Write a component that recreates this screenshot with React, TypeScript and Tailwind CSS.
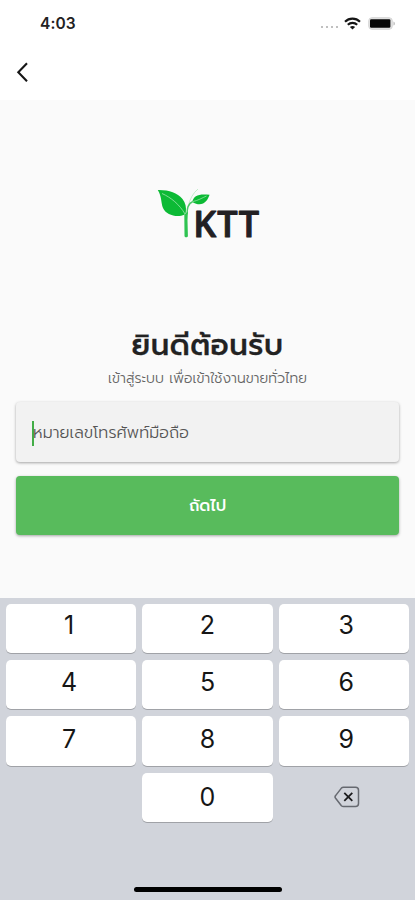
import React from 'react';

const digits = ['1', '2', '3', '4', '5', '6', '7', '8', '9'];

function StatusBar() {
  return (
    <div className="flex h-[46px] items-center justify-between pl-10 pr-[19px]">
      <span className="pt-px text-[15.5px] font-semibold leading-none tracking-[0.1px] text-[#222]">4:03</span>
      <div className="flex items-center">
        <div className="mr-[6px] mt-[8px] flex gap-[3px]">
          <span className="size-[2px] bg-[#c0c0c0]" />
          <span className="size-[2px] bg-[#c0c0c0]" />
          <span className="size-[2px] bg-[#c0c0c0]" />
          <span className="size-[2px] bg-[#c0c0c0]" />
        </div>
        <svg width="17" height="13" viewBox="0 0 17 13" fill="none" stroke="#151515" strokeWidth="2.1" className="mr-[7px]">
          <path d="M1 4.8C5.2.6 11.8.6 16 4.8" />
          <path d="M3.8 7.8c2.7-2.6 6.7-2.6 9.4 0" />
          <path d="M8.5 12.5 5.9 9.9c1.5-1.3 3.7-1.3 5.2 0z" fill="#151515" stroke="none" />
        </svg>
        <svg width="28" height="13" viewBox="0 0 28 13">
          <rect x=".7" y=".7" width="23.6" height="11.6" rx="3.2" fill="#e2e2e2" stroke="#d6d6d6" strokeWidth="1" />
          <rect x="2" y="2.2" width="20.4" height="8.6" rx="1.2" fill="#080808" />
          <path d="M25.5 4.4c1.8.6 1.8 3.6 0 4.2z" fill="#b5b5b5" />
        </svg>
      </div>
    </div>
  );
}

function Logo() {
  return (
    <svg width="112" height="64" viewBox="0 0 112 64">
      <path d="M.8 2C12 1.800 20 4.500 25.500 11c3 4 4 8 3.300 13.500l-1.500 2.300C20 30 9 27 6 20 3.800 14.500 5 9 .8 2z" fill="#0cba35" />
      <path d="M5 5.500C14 9.500 22.500 16.500 28 26" fill="none" stroke="#8fe0a2" strokeWidth=".9" />
      <path d="M35.200 14C36.500 7.500 42 5.500 52.500 6.800 50.500 13.500 45 20 35.200 14z" fill="#0cba35" />
      <path d="M36 13.500c5-1 9-3.500 13.500-5.500" fill="none" stroke="#a5e6b3" strokeWidth=".7" />
      <path d="M31.500 17c1.500-6 4.500-12 9.500-16" fill="none" stroke="#b7e9c0" strokeWidth=".8" />
      <path d="M35.500 13.800c-4 1.700-5.500 6-5.500 12.500" fill="none" stroke="#4cc866" strokeWidth="1.500" />
      <path d="M27.300 26.500l3.600-3-.4 9 .4 15.500c0 1.700-3.400 1.700-3.400 0z" fill="#2fc351" />
      <text
        x="36.200"
        y="49"
        fontFamily="Open Sans, Noto Sans, sans-serif"
        fontSize="36"
        fontWeight="600"
        textLength="66"
        lengthAdjust="spacing"
        fill="#222023"
        stroke="#222023"
        strokeWidth="1"
        strokeLinejoin="round"
      >
        KTT
      </text>
    </svg>
  );
}

function Keypad() {
  return (
    <div className="flex h-[302px] flex-col justify-between bg-[#d1d4db] px-[6px] pb-[8px] pt-[6px]">
      <div className="grid grid-cols-3 gap-x-[6px] gap-y-[7px]">
        {digits.map((digit, i) => (
          <button
            key={digit}
            className={`flex h-[49.200px] items-center justify-center rounded-[5px] bg-white text-[25px] leading-none text-[#161616] shadow-[0_1px_0_#a0a2a7] ${
              i < 3 ? 'pb-[7px]' : i < 6 ? 'pb-[4px]' : 'pb-[3px]'
            } ${i % 3 === 0 ? 'pr-[4px]' : i % 3 === 2 ? 'pl-[5px]' : ''}`}
          >
            {digit}
          </button>
        ))}
        <span />
        <button className="flex h-[49.200px] items-center justify-center rounded-[5px] bg-white text-[25px] leading-none text-[#161616] shadow-[0_1px_0_#a0a2a7]">
          0
        </button>
        <button className="flex h-[49.200px] items-center justify-center pl-[7px]">
          <svg width="26" height="22" viewBox="0 0 26 22" fill="none" strokeLinejoin="round">
            <path
              d="M9.500 1.200H21.500a3 3 0 0 1 3 3v13.400a3 3 0 0 1-3 3H9.500a3 3 0 0 1-2.100-.9L1.800 12.500a2.200 2.200 0 0 1 0-3.100L7.400 2.100a3 3 0 0 1 2.100-.9z"
              stroke="#666970"
              strokeWidth="1.500"
            />
            <path d="M10.300 6.900l8 8M18.300 6.900l-8 8" stroke="#1c1c1e" strokeWidth="1.800" />
          </svg>
        </button>
      </div>
      <div className="mx-auto h-[5px] w-[148px] rounded-full bg-black" />
    </div>
  );
}

export default function App() {
  return (
    <div className="flex h-[900px] w-[415px] flex-col overflow-hidden bg-[#fafafa] font-['Inter',sans-serif]">
      <header className="h-[100px] bg-white">
        <StatusBar />
        <button className="ml-[16px] mt-[16px] block">
          <svg width="13" height="20" viewBox="0 0 13 20" fill="none" stroke="#161616" strokeWidth="2.100">
            <path d="M11 1.300 2.300 10.300l8.700 9" />
          </svg>
        </button>
      </header>

      <main className="flex flex-1 flex-col px-4 font-['Prompt','Kanit','Noto_Sans_Thai','Noto_Sans',sans-serif]">
        <div className="ml-[141px] mt-[88px] h-[64px]">
          <Logo />
        </div>
        <h1 className="mt-[71px] h-[44px] whitespace-nowrap text-center text-[29px] font-medium leading-[44px] tracking-[0.600px] text-[#222] [-webkit-text-stroke:0.300px_#222]">
          ยินดีต้อนรับ
        </h1>
        <p className="mt-px h-[22px] whitespace-nowrap text-center text-[14px] font-light leading-[22px] text-[#666]">
          เข้าสู่ระบบ เพื่อเข้าใช้งานขายทั่วไทย
        </p>
        <div className="mt-[12px] flex h-[60px] items-center rounded-[4px] bg-[#f2f2f2] pl-4 shadow-[0_1px_3px_rgba(0,0,0,0.350)]">
          <span className="mt-[2px] h-[25px] w-[2px] bg-[#43ad47]" />
          <span className="-ml-px mt-px whitespace-nowrap text-[16px] font-light leading-none tracking-[0.100px] text-[#555]">หมายเลขโทรศัพท์มือถือ</span>
        </div>
        <button className="mt-[14px] flex h-[59px] items-center justify-center rounded-[4px] bg-[#58bb5c] text-[16px] font-medium text-white shadow-[0_1px_3px_rgba(0,0,0,0.350)]">
          ถัดไป
        </button>
      </main>

      <Keypad />
    </div>
  );
}
